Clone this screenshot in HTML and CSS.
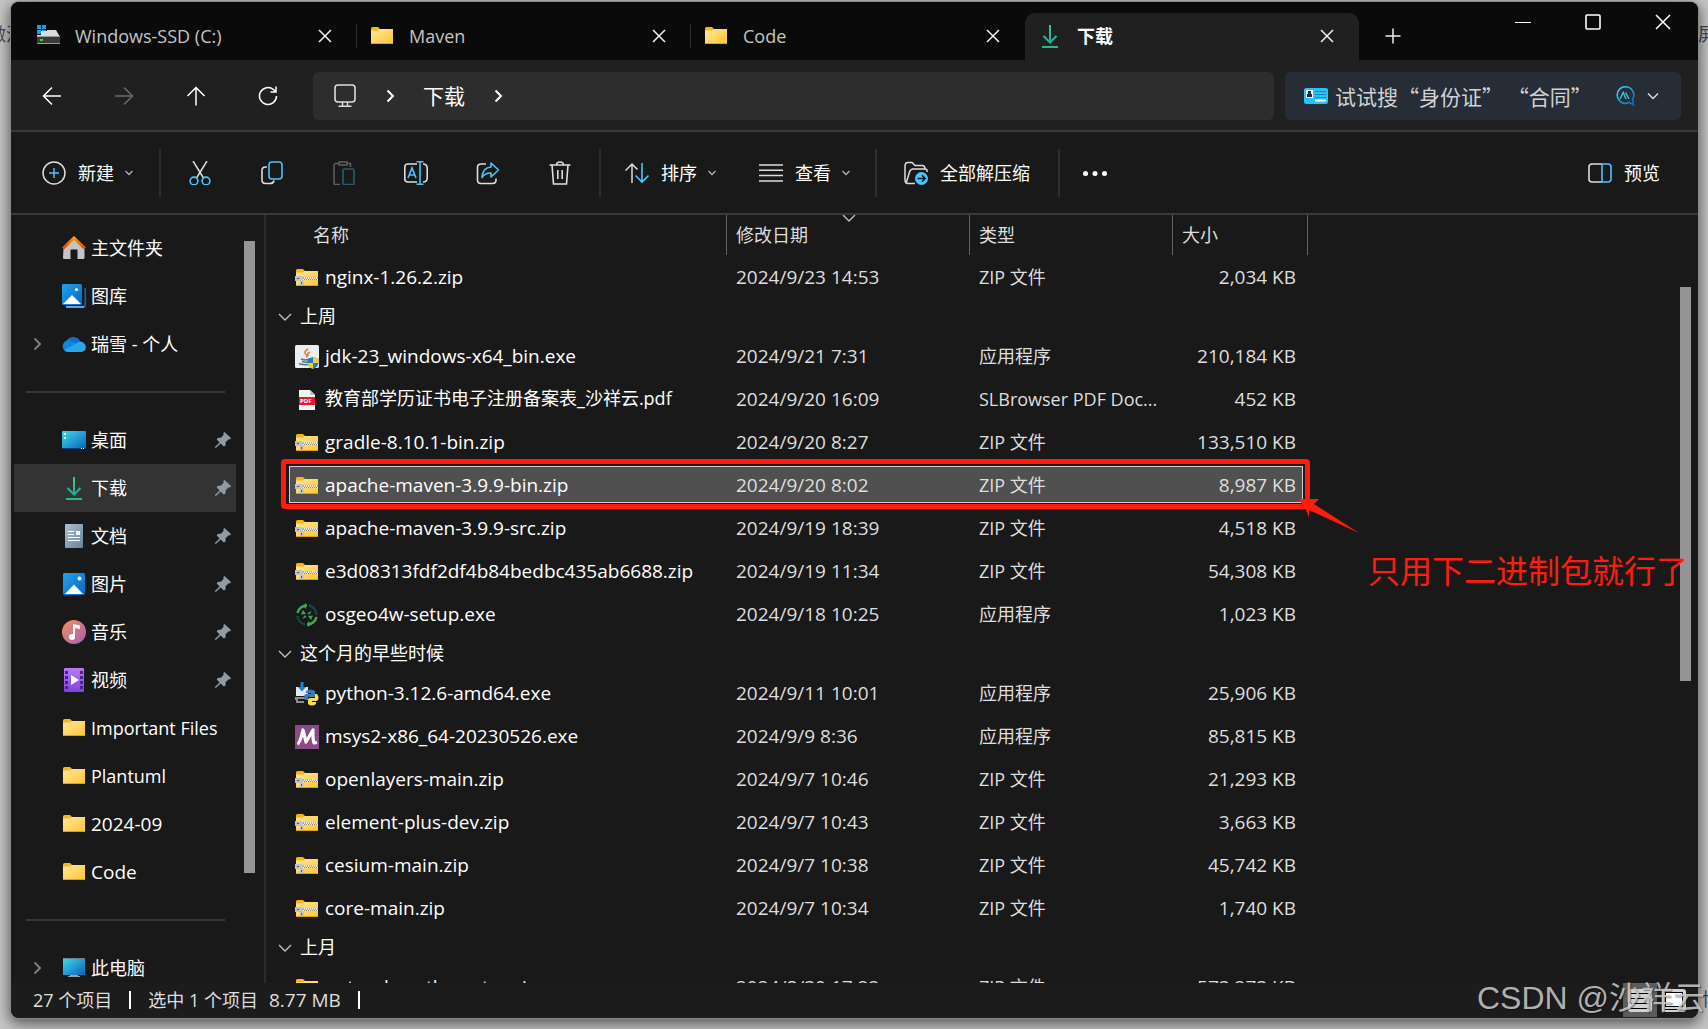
FILE: index.html
```html
<!DOCTYPE html>
<html lang="zh-CN">
<head>
    <meta charset="UTF-8">
    <meta name="viewport" content="width=device-width, initial-scale=1.0">
    <title>下载</title>
    <link rel="stylesheet" href="styles.css">
</head>
<body>
    <!-- shared icons -->
    <svg class="defs" aria-hidden="true">
        <defs>
            <linearGradient id="g-folder" x1="0" y1="0" x2="1" y2="1"><stop offset="0" stop-color="#ffe8a2"/><stop offset="1" stop-color="#ffc52c"/></linearGradient>
            <linearGradient id="g-down" x1="0" y1="0" x2="0" y2="1"><stop offset="0" stop-color="#35d07f"/><stop offset="1" stop-color="#13a5a3"/></linearGradient>
            <linearGradient id="g-blue" x1="0" y1="0" x2="1" y2="1"><stop offset="0" stop-color="#22a2ec"/><stop offset="1" stop-color="#0a66c0"/></linearGradient>
            <linearGradient id="g-desk" x1="0" y1="0" x2="1" y2="1"><stop offset="0" stop-color="#3ddcea"/><stop offset="1" stop-color="#0b62ba"/></linearGradient>
            <linearGradient id="g-doc" x1="0" y1="0" x2="1" y2="1"><stop offset="0" stop-color="#aebfd6"/><stop offset="1" stop-color="#66839f"/></linearGradient>
            <linearGradient id="g-music" x1="0" y1="0" x2="1" y2="1"><stop offset="0" stop-color="#f5915a"/><stop offset="1" stop-color="#a35fb4"/></linearGradient>
            <linearGradient id="g-roof" x1="0" y1="0" x2="0" y2="1"><stop offset="0" stop-color="#ff9a0a"/><stop offset="1" stop-color="#d9480b"/></linearGradient>
            <linearGradient id="g-video" x1="0" y1="0" x2="0" y2="1"><stop offset="0" stop-color="#b57bf5"/><stop offset="1" stop-color="#8440e0"/></linearGradient>
        </defs>
        <symbol id="folder" viewBox="0 0 24 24">
            <path d="M1 4.500Q1 3 2.500 3H8L10 5H22Q23 5 23 6V10H1Z" fill="#fbb612"/>
            <path d="M1 6.500H8L10 5H23V19Q23 20 22 20H2Q1 20 1 19Z" fill="url(#g-folder)"/>
            <path d="M1 19.500H23" stroke="#e0a012"/>
        </symbol>
        <symbol id="zip" viewBox="0 0 24 24">
            <use href="#folder"/>
            <path d="M8 12.500H23" stroke="#f6f0d8" stroke-width="3"/>
            <path d="M8 12H23" stroke="#6e6a5c" stroke-dasharray="1 1"/>
            <path d="M8 13.500H23" stroke="#8a8573" stroke-dasharray="1 1" stroke-dashoffset="1"/>
            <path d="M0 10H6L8 11V15H9V19H5V15H0Z" fill="#c3c3c3"/>
            <path d="M2 12.500H4M6.500 16V18" stroke="#555"/>
        </symbol>
        <symbol id="x" viewBox="0 0 14 14"><path d="M1 1L13 13M13 1L1 13" stroke="#f0f0f0" stroke-width="1.500"/></symbol>
        <symbol id="down" viewBox="0 0 24 24">
            <path d="M12 1V18M5.500 12L12 18.500L18.500 12M4 23H20" fill="none" stroke="url(#g-down)" stroke-width="2"/>
            <path d="M4 23H20" stroke="#27b98c" stroke-width="2"/>
        </symbol>
        <symbol id="chev-d" viewBox="0 0 10 10"><path d="M1.500 3L5 6.500L8.500 3" fill="none" stroke="#b4b4b4" stroke-width="1.300"/></symbol>
        <symbol id="chev-g" viewBox="0 0 14 14"><path d="M1 3L7 9L13 3" fill="none" stroke="#c4c4c4" stroke-width="1.300"/></symbol>
        <symbol id="chev-r" viewBox="0 0 14 14"><path d="M4.500 1.500L10 7L4.500 12.500" fill="none" stroke="currentColor" stroke-width="2"/></symbol>
        <symbol id="pin" viewBox="0 0 18 18"><path d="M10.500 1L17 7L16 8.500L14.500 8.300L11.700 11.200L11.500 14.500L9.800 15.600L6.600 12.400L2.200 16.800L1 17L1.200 15.800L5.600 11.400L2.800 8.600L3.500 7L7.200 6.400L9.700 3.600L9.300 2Z" fill="#929ba3"/></symbol>
    </svg>

    <div class="behind" aria-hidden="true">
        <span class="frag frag-left">激活</span>
        <span class="frag frag-right">屏</span>
        <span class="frag frag-bottom">博</span>
    </div>

    <div class="window">
        <header class="tabs">
            <div class="tab">
                <svg class="icon" viewBox="0 0 24 24"><path d="M1 1H5V5H1ZM6 1H10V5H6ZM1 6H5V10H1ZM6 6H10V10H6Z" fill="#16a0ec"/><path d="M5 11V7H11V6H20L24 13H1V11Z" fill="#dcdcdc"/><path d="M1 12H24V20H1Z" fill="#3b3b3b"/><path d="M1 19.500H24M1 12.500H24" stroke="#999"/><path d="M4 15H7V17H4Z" fill="#2de02d"/></svg>
                <span class="tab-title">Windows-SSD (C:)</span>
                <button class="tab-close" aria-label="关闭"><svg><use href="#x"/></svg></button>
            </div>
            <div class="tab">
                <svg class="icon"><use href="#folder"/></svg>
                <span class="tab-title">Maven</span>
                <button class="tab-close" aria-label="关闭"><svg><use href="#x"/></svg></button>
            </div>
            <div class="tab">
                <svg class="icon"><use href="#folder"/></svg>
                <span class="tab-title">Code</span>
                <button class="tab-close" aria-label="关闭"><svg><use href="#x"/></svg></button>
            </div>
            <div class="tab active">
                <svg class="icon"><use href="#down"/></svg>
                <span class="tab-title">下载</span>
                <button class="tab-close" aria-label="关闭"><svg><use href="#x"/></svg></button>
            </div>
            <button class="new-tab" aria-label="新标签页"><svg viewBox="0 0 16 16"><path d="M8 0.500V15.500M0.500 8H15.500" stroke="#f0f0f0" stroke-width="1.500"/></svg></button>
            <div class="win-buttons">
                <button aria-label="最小化"><svg viewBox="0 0 16 16"><path d="M0 8.500H16" stroke="#fff"/></svg></button>
                <button aria-label="最大化"><svg viewBox="0 0 16 16"><rect x="1" y="1" width="14" height="14" rx="1" fill="none" stroke="#fff" stroke-width="1.600"/></svg></button>
                <button aria-label="关闭"><svg viewBox="0 0 16 16"><path d="M1 1L15 15M15 1L1 15" stroke="#fff" stroke-width="1.500"/></svg></button>
            </div>
        </header>

        <nav class="navbar">
            <button class="nav-btn" aria-label="后退"><svg viewBox="0 0 20 20"><path d="M19 10H1.500M10 1.500L1.500 10L10 18.500" fill="none" stroke="#fff" stroke-width="1.500"/></svg></button>
            <button class="nav-btn" aria-label="前进"><svg viewBox="0 0 20 20"><path d="M1 10H18.500M10 1.500L18.500 10L10 18.500" fill="none" stroke="#6c6c6c" stroke-width="1.500"/></svg></button>
            <button class="nav-btn" aria-label="向上"><svg viewBox="0 0 20 20"><path d="M10 19.500V1.500M1.500 10L10 1.500L18.500 10" fill="none" stroke="#fff" stroke-width="1.500"/></svg></button>
            <button class="nav-btn" aria-label="刷新"><svg viewBox="0 0 20 20"><path d="M18.500 10A8.500 8.500 0 1 1 15.500 3.500L17.500 5.800M18 0.500V6H12.500" fill="none" stroke="#fff" stroke-width="1.500"/></svg></button>
            <div class="address">
                <svg class="icon" viewBox="0 0 24 24"><rect x="2" y="1" width="20" height="17" rx="3" fill="none" stroke="#ddd" stroke-width="1.600"/><path d="M9.500 18V22M14.500 18V22M5.500 22.200H18.500" stroke="#ddd" stroke-width="1.500"/></svg>
                <svg class="crumb-sep"><use href="#chev-r"/></svg>
                <a class="crumb" href="#">下载</a>
                <svg class="crumb-sep"><use href="#chev-r"/></svg>
            </div>
            <div class="search">
                <svg class="icon" viewBox="0 0 24 24"><rect y="4" width="24" height="16" rx="2" fill="#27c1fb"/><path d="M2 6H9V14H2Z" fill="#fff"/><path d="M4 7H7V10H8V13H3V10H4Z" fill="#1d2a45"/><path d="M11 7.500H22M11 10.500H22M11 13.500H22" stroke="#1385cc"/><path d="M11 16.500H22" stroke="#fff" stroke-width="2"/></svg>
                <input type="text" aria-label="搜索" placeholder="试试搜“身份证” “合同”">
                <svg class="search-logo" viewBox="0 0 20 20"><path d="M14.500 16.300A8.300 8.300 0 1 1 17.500 13.500L18.500 19L14 16" fill="none" stroke="url(#g-desk)" stroke-width="1.600"/><path d="M5 13L8.200 6.500L11 13M10.500 6.500L14 13" fill="none" stroke="#2fc6d6" stroke-width="1.500"/></svg>
                <button class="search-more" aria-label="更多"><svg viewBox="0 0 12 12"><path d="M1 3.500L6 8.500L11 3.500" fill="none" stroke="#ddd" stroke-width="1.500"/></svg></button>
            </div>
        </nav>

        <div class="toolbar">
            <button class="tool-text">
                <svg class="icon" viewBox="0 0 24 24"><circle cx="12" cy="12" r="11" fill="none" stroke="#ddd" stroke-width="1.500"/><path d="M12 7V17M7 12H17" stroke="#4cc2ff" stroke-width="1.500"/></svg>
                <span>新建</span><svg class="caret"><use href="#chev-d"/></svg>
            </button>
            <span class="sep"></span>
            <button class="tool" aria-label="剪切"><svg class="icon" viewBox="0 0 24 24"><path d="M5 0L15.500 17M19 0L8.500 17" stroke="#ddd" stroke-width="1.500"/><circle cx="6" cy="20" r="3.900" fill="none" stroke="#4cc2ff" stroke-width="1.600"/><circle cx="18" cy="20" r="3.900" fill="none" stroke="#4cc2ff" stroke-width="1.600"/></svg></button>
            <button class="tool" aria-label="复制"><svg class="icon" viewBox="0 0 24 24"><path d="M7 6H5.500Q2 6 2 9.500V19Q2 22.500 5.500 22.500H10Q13.500 22.500 14 19.500" fill="none" stroke="#ddd" stroke-width="1.600"/><rect x="9" y="1" width="13" height="17" rx="3" fill="none" stroke="#4cc2ff" stroke-width="1.600"/></svg></button>
            <button class="tool" aria-label="粘贴" disabled><svg class="icon" viewBox="0 0 24 24"><path d="M7 2.500H3.500Q2 2.500 2 4V22Q2 23.500 3.500 23.500H8M16 2.500H18.500V6M7 1H15V4H7Z" fill="none" stroke="#5f5f5f" stroke-width="1.500"/><rect x="11" y="8" width="11" height="15.500" rx="1.500" fill="none" stroke="#2b5a73" stroke-width="1.600"/></svg></button>
            <button class="tool" aria-label="重命名"><svg class="icon" viewBox="0 0 24 24"><path d="M13 3H4Q0.800 3 0.800 6V18Q0.800 21 4 21H13M19 3Q23.200 3 23.200 7V17Q23.200 21 19 21" fill="none" stroke="#ddd" stroke-width="1.600"/><path d="M4 17L8 7L12 17M5.500 14H10.500M16 1V23M12.500 0.800H19.500M12.500 23.200H19.500" fill="none" stroke="#4cc2ff" stroke-width="1.600"/></svg></button>
            <button class="tool" aria-label="共享"><svg class="icon" viewBox="0 0 24 24"><path d="M10 3H5Q1.500 3 1.500 6.500V19Q1.500 22.500 5 22.500H16.500Q20 22.500 20 19V17.500" fill="none" stroke="#ddd" stroke-width="1.600"/><path d="M15 2L22.500 9L15 16V12Q9.500 11.500 6 16.500Q6.500 6.500 15 6Z" fill="none" stroke="#4cc2ff" stroke-width="1.600" stroke-linejoin="round"/></svg></button>
            <button class="tool" aria-label="删除"><svg class="icon" viewBox="0 0 24 24"><path d="M1.500 4H22.500M8.500 4Q8.500 1 12 1Q15.500 1 15.500 4M4 4L5.500 23H18.500L20 4M9.800 9V18M14.200 9V18" fill="none" stroke="#ddd" stroke-width="1.600"/></svg></button>
            <span class="sep"></span>
            <button class="tool-text menu">
                <svg class="icon" viewBox="0 0 24 24"><path d="M7 22V3M0.500 9.500L7 3L12.500 8.500" fill="none" stroke="#ddd" stroke-width="1.500"/><path d="M17 2V21M10.500 14.500L17 21L23.500 14.500" fill="none" stroke="#4cc2ff" stroke-width="1.600"/></svg>
                <span>排序</span><svg class="caret"><use href="#chev-d"/></svg>
            </button>
            <button class="tool-text menu">
                <svg class="icon" viewBox="0 0 24 24"><path d="M0 4H24M0 9.300H24M0 14.600H24M0 20H24" stroke="#ddd" stroke-width="1.500"/></svg>
                <span>查看</span><svg class="caret"><use href="#chev-d"/></svg>
            </button>
            <span class="sep"></span>
            <button class="tool-text extract">
                <svg class="icon" viewBox="0 0 24 24"><path d="M11 22.500H4Q1 22.500 1 19V5Q1 1.500 4 1.500H8L11 4.500H18Q21 4.500 21 8H9Q6.500 8 5.500 11L2.500 21M21 8Q23.500 8 23 11" fill="none" stroke="#ddd" stroke-width="1.500"/><circle cx="17.500" cy="17.500" r="6.500" fill="#4cc2ff"/><path d="M13.500 17.500H21M18 14.300L21.200 17.500L18 20.700" fill="none" stroke="#101820" stroke-width="1.600"/></svg>
                <span>全部解压缩</span>
            </button>
            <span class="sep"></span>
            <button class="tool more" aria-label="查看更多"><svg class="icon" viewBox="0 0 24 24"><circle cx="2.500" cy="12.500" r="2.500" fill="#fff"/><circle cx="12" cy="12.500" r="2.500" fill="#fff"/><circle cx="21.500" cy="12.500" r="2.500" fill="#fff"/></svg></button>
            <button class="tool-text preview">
                <svg class="icon" viewBox="0 0 24 24"><path d="M14 3H4Q1 3 1 6V18Q1 21 4 21H14" fill="none" stroke="#ddd" stroke-width="1.600"/><path d="M14 3H20Q23 3 23 6V18Q23 21 20 21H14Z" fill="none" stroke="#4cc2ff" stroke-width="1.600"/></svg>
                <span>预览</span>
            </button>
        </div>

        <div class="body">
            <aside class="sidebar">
                <ul class="tree">
                    <li><a href="#"><svg class="icon" viewBox="0 0 24 24"><path d="M1.500 12L12 2L22.500 12V22Q22.500 23 21.500 23H15.500V13.500H8.500V23H2Q1 23 1 22Z" fill="#c4c4c4"/><path d="M1 12.500L12 2L23 12.500" fill="none" stroke="url(#g-roof)" stroke-width="3"/></svg><span>主文件夹</span></a></li>
                    <li><a href="#"><svg class="icon" viewBox="0 0 24 24"><path d="M4 23H21Q23.500 23 23.500 20V4" fill="none" stroke="#1464b4" stroke-width="2"/><path d="M4 23H22" stroke="#5fa5dc" stroke-width="2"/><rect width="20" height="21" rx="1.500" fill="url(#g-blue)"/><path d="M1 20L10 11L19 20Z" fill="#fff"/><circle cx="14.500" cy="5.500" r="1.600" fill="#fff"/></svg><span>图库</span></a></li>
                    <li><svg class="expand"><use href="#chev-r"/></svg><a href="#"><svg class="icon" viewBox="0 0 24 24"><path d="M6 20A6 6 0 0 1 4.500 8.700A8 8 0 0 1 18.500 9.500A5.500 5.500 0 0 1 19 20Z" fill="#0f6fc9"/><path d="M4.500 8.700A6 6 0 0 0 2 18L14 11.500L9 8.500Q7 7.500 4.500 8.700Z" fill="#1287de"/><path d="M2 18Q3.500 20 6 20H19Q24 19.500 23.900 14.500Q22.500 9.500 18 9.800Q16 10 14 11.500Z" fill="#2aa5ec"/></svg><span>瑞雪 - 个人</span></a></li>
                    <li class="rule"><hr></li>
                    <li><a href="#"><svg class="icon" viewBox="0 0 24 24"><rect y="3" width="24" height="18" rx="1" fill="url(#g-desk)"/><path d="M2 5H4V7H2ZM2 9H4V11H2Z" fill="#fff"/><path d="M0 20.500H24" stroke="#0a3e7c"/><path d="M19 20.500H22" stroke="#fff" stroke-dasharray="1 1"/></svg><span>桌面</span></a><svg class="pin"><use href="#pin"/></svg></li>
                    <li class="current"><a href="#"><svg class="icon"><use href="#down"/></svg><span>下载</span></a><svg class="pin"><use href="#pin"/></svg></li>
                    <li><a href="#"><svg class="icon" viewBox="0 0 24 24"><rect x="3" width="18" height="24" rx="1" fill="url(#g-doc)"/><path d="M6 7.500H12M6 10.500H12M6 13.500H18M6 16.500H18" stroke="#fff"/><path d="M14 7H18V11H14Z" fill="#fff"/></svg><span>文档</span></a><svg class="pin"><use href="#pin"/></svg></li>
                    <li><a href="#"><svg class="icon" viewBox="0 0 24 24"><rect x="1" y="1" width="22" height="22" rx="1.500" fill="url(#g-blue)"/><path d="M3 22L12 12.500L21 22Z" fill="#fff"/><circle cx="17.500" cy="6.500" r="2" fill="#fff"/></svg><span>图片</span></a><svg class="pin"><use href="#pin"/></svg></li>
                    <li><a href="#"><svg class="icon" viewBox="0 0 24 24"><circle cx="12" cy="12" r="12" fill="url(#g-music)"/><circle cx="10" cy="17" r="3" fill="#fff"/><path d="M11 17V4L18 5.500V9L13 8V17Z" fill="#fff"/></svg><span>音乐</span></a><svg class="pin"><use href="#pin"/></svg></li>
                    <li><a href="#"><svg class="icon" viewBox="0 0 24 24"><rect x="2" width="20" height="24" rx="1" fill="url(#g-video)"/><path d="M4.500 3V23M19.500 3V23" stroke="#4b2587" stroke-width="3" stroke-dasharray="3 2"/><path d="M9 7V17L17 12Z" fill="#fff"/></svg><span>视频</span></a><svg class="pin"><use href="#pin"/></svg></li>
                    <li><a href="#"><svg class="icon"><use href="#folder"/></svg><span>Important Files</span></a></li>
                    <li><a href="#"><svg class="icon"><use href="#folder"/></svg><span>Plantuml</span></a></li>
                    <li class="latin"><a href="#"><svg class="icon"><use href="#folder"/></svg><span>2024-09</span></a></li>
                    <li class="latin"><a href="#"><svg class="icon"><use href="#folder"/></svg><span>Code</span></a></li>
                    <li class="rule"><hr></li>
                    <li><svg class="expand"><use href="#chev-r"/></svg><a href="#"><svg class="icon" viewBox="0 0 24 24"><rect x="1" y="2" width="22" height="17" fill="url(#g-desk)"/><path d="M1 2.500H23" stroke="#6f7f8c"/><path d="M8 19H16V20H8ZM6 20H18V21H6Z" fill="#9aa4ad"/></svg><span>此电脑</span></a></li>
                </ul>
                <div class="scroll scroll-side"></div>
            </aside>

            <main class="files">
                <table>
                    <colgroup><col class="c-name"><col class="c-date"><col class="c-type"><col class="c-size"></colgroup>
                    <thead>
                        <tr><th>名称</th><th>修改日期<svg class="sorted"><use href="#chev-g"/></svg></th><th>类型</th><th>大小</th></tr>
                    </thead>
                    <tbody>
                        <tr><td class="latin"><svg class="icon"><use href="#zip"/></svg>nginx-1.26.2.zip</td><td>2024/9/23 14:53</td><td>ZIP 文件</td><td>2,034 KB</td></tr>
                        <tr class="group"><th colspan="4"><svg class="toggle"><use href="#chev-g"/></svg>上周</th></tr>
                        <tr><td class="latin"><svg class="icon" viewBox="0 0 24 24"><rect width="24" height="23" rx="1.500" fill="#e9eef3"/><path d="M13 4Q8 7 11 9.500Q13 11 11 12.500M15 7Q11 9 13.500 11" fill="none" stroke="#e8762c" stroke-width="1.500"/><path d="M6 14Q11 16 16 13.500M7 16.500Q11 18 15 16.500M4 18.500Q11 21 17 18.500" fill="none" stroke="#4c7896" stroke-width="1.500"/><path d="M18 12L23.500 14V18Q23 22 18 24Q13 22 12.500 18V14Z" fill="#1680d2"/><path d="M18 12L23.500 14V18H18ZM18 18V24Q13 22 12.500 18Z" fill="#ffcc1a"/></svg>jdk-23_windows-x64_bin.exe</td><td>2024/9/21 7:31</td><td>应用程序</td><td>210,184 KB</td></tr>
                        <tr><td><svg class="icon" viewBox="0 0 24 24"><path d="M4 1H15L20 6V21H4Z" fill="#f4f4f4"/><path d="M15 1L20 6H15Z" fill="#c6c6c6"/><rect x="4" y="8" width="16" height="8" fill="#e5192b"/><text x="5" y="14" class="pdf-text">PDF</text></svg>教育部学历证书电子注册备案表_沙祥云.pdf</td><td>2024/9/20 16:09</td><td>SLBrowser PDF Doc...</td><td>452 KB</td></tr>
                        <tr><td class="latin"><svg class="icon"><use href="#zip"/></svg>gradle-8.10.1-bin.zip</td><td>2024/9/20 8:27</td><td>ZIP 文件</td><td>133,510 KB</td></tr>
                        <tr class="selected"><td class="latin"><svg class="icon"><use href="#zip"/></svg>apache-maven-3.9.9-bin.zip<span class="mark"></span></td><td>2024/9/20 8:02</td><td>ZIP 文件</td><td>8,987 KB</td></tr>
                        <tr><td class="latin"><svg class="icon"><use href="#zip"/></svg>apache-maven-3.9.9-src.zip</td><td>2024/9/19 18:39</td><td>ZIP 文件</td><td>4,518 KB</td></tr>
                        <tr><td class="latin"><svg class="icon"><use href="#zip"/></svg>e3d08313fdf2df4b84bedbc435ab6688.zip</td><td>2024/9/19 11:34</td><td>ZIP 文件</td><td>54,308 KB</td></tr>
                        <tr><td class="latin"><svg class="icon" viewBox="0 0 24 24"><path d="M2.500 10A9.500 9.500 0 0 1 12 2.500" fill="none" stroke="#46a758" stroke-width="2.400"/><path d="M21.500 14A9.500 9.500 0 0 1 12 21.500" fill="none" stroke="#46a758" stroke-width="2.400"/><path d="M14 2.500A9.500 9.500 0 0 1 21.500 12M10 21.500A9.500 9.500 0 0 1 2.500 13" fill="none" stroke="#12474a" stroke-width="2.400"/><path d="M11 0V6L8 3ZM13 24V18L16 21Z" fill="#46a758"/><path d="M8 7L11 11L6 11.500ZM16 17L13 13L18 12.500ZM17 8L12.500 10L14 12ZM7 16L11.500 14L10 12Z" fill="#3f9d62"/></svg>osgeo4w-setup.exe</td><td>2024/9/18 10:25</td><td>应用程序</td><td>1,023 KB</td></tr>
                        <tr class="group"><th colspan="4"><svg class="toggle"><use href="#chev-g"/></svg>这个月的早些时候</th></tr>
                        <tr><td class="latin"><svg class="icon" viewBox="0 0 24 24"><path d="M1 5H13V14H1Z" fill="#e4e9ee"/><path d="M0 15H11V17H3V19H9V21H1V18H0Z" fill="#8b8f93"/><path d="M5.500 0H8.500V5H11L7 9.500L3 5H5.500Z" fill="#1187df"/><path d="M11 9Q16 6 20 9V15H13V18H10Q8 13 11 12H16V11H11Z" fill="#3b7bb0"/><path d="M20 12H22Q25 16 22 19H17V20H21V22Q17 25 13 22V17Q14 16 16 16H20Z" fill="#ffdd4f"/></svg>python-3.12.6-amd64.exe</td><td>2024/9/11 10:01</td><td>应用程序</td><td>25,906 KB</td></tr>
                        <tr><td class="latin"><svg class="icon" viewBox="0 0 24 24"><rect width="24" height="24" fill="#894c84"/><path d="M2.500 19Q5 18 8 5L11 17L18 5Q17.500 14 19 18L22 17.500" fill="none" stroke="#fff" stroke-width="3.200" stroke-linejoin="round"/></svg>msys2-x86_64-20230526.exe</td><td>2024/9/9 8:36</td><td>应用程序</td><td>85,815 KB</td></tr>
                        <tr><td class="latin"><svg class="icon"><use href="#zip"/></svg>openlayers-main.zip</td><td>2024/9/7 10:46</td><td>ZIP 文件</td><td>21,293 KB</td></tr>
                        <tr><td class="latin"><svg class="icon"><use href="#zip"/></svg>element-plus-dev.zip</td><td>2024/9/7 10:43</td><td>ZIP 文件</td><td>3,663 KB</td></tr>
                        <tr><td class="latin"><svg class="icon"><use href="#zip"/></svg>cesium-main.zip</td><td>2024/9/7 10:38</td><td>ZIP 文件</td><td>45,742 KB</td></tr>
                        <tr><td class="latin"><svg class="icon"><use href="#zip"/></svg>core-main.zip</td><td>2024/9/7 10:34</td><td>ZIP 文件</td><td>1,740 KB</td></tr>
                        <tr class="group"><th colspan="4"><svg class="toggle"><use href="#chev-g"/></svg>上月</th></tr>
                        <tr><td class="latin"><svg class="icon"><use href="#zip"/></svg>natural_earth_vector.zip</td><td>2024/8/30 17:22</td><td>ZIP 文件</td><td>573,273 KB</td></tr>
                    </tbody>
                </table>
                <div class="scroll scroll-files"></div>
                <svg class="arrow" viewBox="0 0 60 36"><path d="M0 0L20 0L15 5L60 34L10 11L10 18L7 11Z" fill="#ff1c0f"/></svg>
                <p class="note">只用下二进制包就行了</p>
            </main>
        </div>

        <footer class="status">
            <span>27 个项目</span>
            <span class="bar"></span>
            <span>选中 1 个项目</span>
            <span class="latin total">8.77 MB</span>
            <span class="bar"></span>
            <div class="views">
                <button class="on" aria-label="详细信息"><svg viewBox="0 0 24 24"><rect y="1" width="24" height="23" rx="3" fill="#d2d2d2"/><path d="M3 5.500H21M3 10.500H21M3 15.500H21M3 20.500H21" stroke="#000"/></svg></button>
                <button aria-label="大图标"><svg viewBox="0 0 24 24"><rect y="1" width="24" height="23" rx="3" fill="#d2d2d2"/><rect x="3.500" y="4.500" width="17" height="14" fill="#fff" stroke="#000"/><path d="M3 21.500H21" stroke="#000"/></svg></button>
            </div>
        </footer>
    </div>

    <div class="watermark">CSDN @沙祥云</div>
</body>
</html>
```

FILE: styles.css
```css
* {
    box-sizing: border-box;
}

body {
    margin: 0;
    height: 100vh;
    padding: 2px 10px 11px 11px;
    overflow: hidden;
    position: relative;
    background: #c6c6c6;
    color: #fff;
    font-family: "Open Sans", "Noto Sans CJK SC", sans-serif;
    font-size: 18px;
    line-height: 24px;
}

button {
    background: none;
    border: none;
    padding: 0;
    margin: 0;
    color: inherit;
    font: inherit;
    display: flex;
    align-items: center;
    justify-content: center;
}

a {
    color: inherit;
    text-decoration: none;
}

svg {
    display: block;
    flex: none;
}

.defs {
    position: absolute;
    width: 0;
    height: 0;
}

.icon {
    width: 24px;
    height: 24px;
}

.latin {
    font-size: 19px;
}

/* page that shows round the window */
.behind {
    position: absolute;
    inset: 0;
    overflow: hidden;
}

.frag {
    position: absolute;
    color: #44485c;
}

.frag-left {
    left: -12px;
    top: 22px;
}

.frag-right {
    right: -8px;
    top: 22px;
}

.frag-bottom {
    right: -12px;
    bottom: 18px;
}

.window {
    position: relative;
    height: 100%;
    display: flex;
    flex-direction: column;
    overflow: hidden;
    background: #191919;
    border-radius: 8px;
    box-shadow: 0 0 0 1px #8a8a8a, 0 4px 14px 2px rgba(0, 0, 0, 0.55);
}

/* tabs */
.tabs {
    display: flex;
    flex: none;
    height: 58px;
    padding: 11px 0 0 12px;
    background: #0a0a0a;
}

.tab {
    flex: 0 1 334px;
    display: flex;
    align-items: center;
    padding: 0 25px 2px 13px;
    position: relative;
    color: #c4c4c4;
}

.tab:not(.active) + .tab:not(.active)::before {
    content: "";
    position: absolute;
    left: -1px;
    top: 11px;
    width: 1px;
    height: 24px;
    background: #2c2c2c;
}

.tab.active {
    background: #202020;
    border-radius: 10px 10px 0 0;
    color: #fff;
    font-weight: 700;
}

.tab-title {
    flex: 1;
    margin-left: 15px;
}

.tab-close svg {
    width: 14px;
    height: 14px;
}

.new-tab {
    width: 68px;
    padding-bottom: 2px;
}

.new-tab svg {
    width: 16px;
    height: 16px;
}

.win-buttons {
    display: flex;
    margin-left: auto;
    height: 18px;
}

.win-buttons button {
    width: 70px;
}

.win-buttons svg {
    width: 16px;
    height: 16px;
}

/* address row */
.navbar {
    display: flex;
    flex: none;
    align-items: center;
    height: 72px;
    padding: 1px 17px 0 5px;
    background: #202020;
    border-bottom: 2px solid #393939;
}

.nav-btn {
    width: 72px;
    height: 40px;
}

.nav-btn svg {
    width: 20px;
    height: 20px;
}

.address {
    flex: 1;
    display: flex;
    align-items: center;
    height: 48px;
    margin-left: 9px;
    padding-left: 20px;
    border-radius: 6px;
    background: #2d2d2d;
    font-size: 21px;
}

.crumb-sep {
    width: 14px;
    height: 14px;
    margin: 0 26px;
}

.search {
    width: 396px;
    height: 48px;
    margin-left: 11px;
    padding: 0 22px 0 19px;
    display: flex;
    align-items: center;
    border-radius: 6px;
    background: #262d36;
}

.search input {
    flex: 1;
    min-width: 0;
    margin-left: 7px;
    padding: 0;
    border: none;
    outline: none;
    background: none;
    color: #d0d3d6;
    font-family: "Noto Sans CJK SC", sans-serif;
    font-size: 21px;
}

.search input::placeholder {
    color: #d0d3d6;
    opacity: 1;
}

.search-logo {
    width: 20px;
    height: 20px;
}

.search-more {
    margin-left: 12px;
}

.search-more svg {
    width: 12px;
    height: 12px;
}

/* command bar */
.toolbar {
    display: flex;
    flex: none;
    align-items: center;
    height: 83px;
    padding: 0 16px 0 9px;
    border-bottom: 2px solid #393939;
}

.tool {
    width: 72px;
    height: 48px;
}

.tool-text {
    height: 48px;
    padding: 0 22px;
}

.tool-text span {
    margin-left: 12px;
}

.tool-text.menu {
    padding: 0 21px;
}

.tool-text.extract {
    padding: 0 25px 0 24px;
}

.tool.more {
    width: 64px;
}

.caret {
    width: 10px;
    height: 10px;
    margin-left: 10px;
}

.sep {
    width: 2px;
    height: 48px;
    margin: 0 3px;
    background: #2e2e2e;
}

.preview {
    margin-left: auto;
}

/* main area */
.body {
    flex: 1;
    min-height: 0;
    display: flex;
}

.sidebar {
    position: relative;
    width: 255px;
    flex: none;
    overflow: hidden;
    padding: 9px 28px 0 3px;
    border-right: 2px solid #2c2c2c;
}

.tree {
    list-style: none;
    margin: 0;
    padding: 0;
}

.tree li {
    display: flex;
    align-items: center;
    height: 48px;
    padding: 0 4px 0 16px;
}

.tree a {
    flex: 1;
    display: flex;
    align-items: center;
    gap: 5px;
    margin-left: 32px;
}

.tree .current {
    background: #333;
}

.tree .rule {
    padding: 0 11px 0 12px;
}

.tree hr {
    flex: 1;
    margin: 0;
    border: none;
    border-top: 2px solid #393939;
}

.expand {
    width: 14px;
    height: 14px;
    margin-right: -14px;
    color: #7c7c7c;
}

.pin {
    width: 18px;
    height: 18px;
}

.scroll {
    position: absolute;
    width: 11px;
    background: #949494;
}

.scroll-side {
    right: 9px;
    top: 26px;
    height: 632px;
}

.scroll-files {
    right: 7px;
    top: 72px;
    height: 394px;
}

.files {
    position: relative;
    flex: 1;
    overflow: hidden;
    padding-left: 1px;
}

.files table {
    table-layout: fixed;
    width: 1041px;
    border-collapse: separate;
    border-spacing: 0;
}

.c-name {
    width: 460px;
}

.c-date {
    width: 243px;
}

.c-type {
    width: 203px;
}

.c-size {
    width: 135px;
}

thead th {
    position: relative;
    height: 40px;
    padding: 0 9px;
    text-align: left;
    font-weight: 400;
    color: #dedede;
    border-right: 1px solid #636363;
}

thead th:first-child {
    padding-left: 46px;
}

.sorted {
    position: absolute;
    left: 115px;
    top: -3px;
    width: 14px;
    height: 14px;
}

tbody td {
    height: 43px;
    padding: 0 9px;
    color: #dedede;
    white-space: nowrap;
}

tbody td:first-child {
    padding-top: 2px;
    padding-left: 28px;
    color: #fff;
}

tbody td:nth-child(2),
tbody td:nth-child(4) {
    font-size: 19px;
}

tbody td:nth-child(4) {
    padding-right: 12px;
    text-align: right;
}

td .icon,
.toggle {
    display: inline-block;
    vertical-align: middle;
    margin-right: 6px;
}

.group th {
    height: 36px;
    padding: 0 0 0 11px;
    text-align: left;
    font-weight: 400;
}

.toggle {
    width: 14px;
    height: 14px;
    margin-right: 8px;
}

.pdf-text {
    font: 700 6px "Open Sans", sans-serif;
    fill: #fff;
}

.selected {
    position: relative;
    z-index: 0;
}

.selected td:first-child::before {
    content: "";
    position: absolute;
    z-index: -1;
    inset: 3px 5px 3px 22px;
    background: #505050;
    border: 1px solid #d0d0d0;
}

/* red notes over the list */
.mark {
    position: absolute;
    inset: -4px -2px -3px 14px;
    border: 5px solid #ff1c0f;
    border-radius: 4px;
}

.arrow {
    position: absolute;
    left: 1033px;
    top: 284px;
    width: 60px;
    height: 36px;
}

.note {
    position: absolute;
    right: 10px;
    top: 336px;
    margin: 0;
    color: #ff1c0f;
    font-size: 32px;
    line-height: 40px;
    white-space: nowrap;
}

.status {
    flex: none;
    display: flex;
    align-items: center;
    height: 35px;
    padding: 0 7px 1px 22px;
    background: #1c1c1c;
    color: #dedede;
}

.bar {
    width: 2px;
    height: 18px;
    margin: 0 17px;
    background: #fff;
}

.total {
    margin-left: 11px;
}

.views {
    display: flex;
    margin-left: auto;
    align-self: stretch;
}

.views button {
    width: 34px;
}

.views .on {
    background: #5c5c5c;
}

.views svg {
    width: 24px;
    height: 24px;
}

.watermark {
    position: absolute;
    right: 3px;
    bottom: 11px;
    color: rgba(205, 205, 205, 0.85);
    font-family: "Liberation Sans", "Noto Sans CJK SC", sans-serif;
    font-size: 32px;
    line-height: 40px;
    text-shadow: 1px 1px 1px rgba(0, 0, 0, 0.4);
}
```
